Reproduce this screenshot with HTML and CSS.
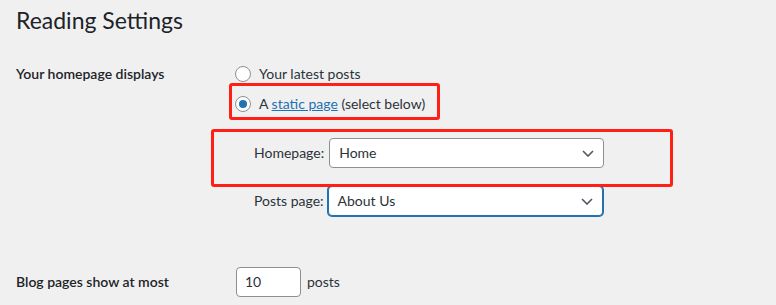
FILE: index.html
```html
<!DOCTYPE html>
<html lang="en">
<head>
    <meta charset="UTF-8">
    <title>Reading Settings</title>
    <link rel="stylesheet" href="styles.css">
</head>
<body>
    <div class="wrap">
        <h1>Reading Settings</h1>

        <div class="form-row row-front">
            <div class="row-label">Your homepage displays</div>
            <div class="row-field">
                <label class="choice"><span class="radio"></span>Your latest posts</label>
                <label class="choice marked"><span class="radio checked"></span>A&nbsp;<a href="#">static page</a>&nbsp;(select below)</label>
                <div class="page-picks">
                    <label class="pick marked-wide">
                        <span>Homepage:</span>
                        <span class="select">Home
                            <svg width="12" height="7" viewBox="0 0 12 7"><path d="M1 1l5 5 5-5" fill="none" stroke="#50575e" stroke-width="1.6"/></svg>
                        </span>
                    </label>
                    <label class="pick">
                        <span>Posts page:</span>
                        <span class="select focused">About Us
                            <svg width="12" height="7" viewBox="0 0 12 7"><path d="M1 1l5 5 5-5" fill="none" stroke="#50575e" stroke-width="1.6"/></svg>
                        </span>
                    </label>
                </div>
            </div>
        </div>

        <div class="form-row row-posts">
            <div class="row-label">Blog pages show at most</div>
            <div class="row-field inline">
                <span class="number-box">10</span>
                <span class="suffix">posts</span>
            </div>
        </div>
    </div>
</body>
</html>
```

FILE: styles.css
```css
body {
    margin: 0;
    background-color: #f0f0f1;
    color: #1d2327;
    font-family: Lato, "Noto Sans", sans-serif;
    font-size: 14px;
    line-height: 20px;
}
.wrap {
    padding-left: 16px;
}
h1 {
    margin: 5px 0 0 0;
    font-size: 23px;
    font-weight: 400;
    line-height: 30px;
    color: #1d2327;
}
.form-row {
    display: flex;
}
.row-label {
    width: 219px;
    flex-shrink: 0;
    font-weight: 600;
}
.row-front {
    margin-top: 29px;
}
.row-field {
    display: flex;
    flex-direction: column;
    align-items: flex-start;
    color: #2c3338;
}
.choice {
    display: inline-flex;
    align-items: center;
    height: 20px;
    margin-bottom: 10px;
}
.choice a {
    color: #2271b1;
}
.radio {
    width: 14px;
    height: 14px;
    border: 1px solid #8c8f94;
    border-radius: 50%;
    background: #fff;
    margin-right: 8px;
    display: flex;
    align-items: center;
    justify-content: center;
}
.radio.checked::before {
    content: "";
    width: 8px;
    height: 8px;
    border-radius: 50%;
    background: #2271b1;
}
.marked {
    position: relative;
}
.marked::after {
    content: "";
    position: absolute;
    top: -11px;
    left: -6px;
    width: 205px;
    height: 31px;
    border: 3px solid #ff1f14;
    border-radius: 3px;
}
.page-picks {
    margin-top: 14px;
    margin-left: 19px;
    display: flex;
    flex-direction: column;
    gap: 18px;
}
.pick {
    display: inline-flex;
    align-items: center;
    gap: 5px;
    align-self: flex-start;
}
.marked-wide {
    position: relative;
}
.marked-wide::after {
    content: "";
    position: absolute;
    top: -9px;
    bottom: -19px;
    left: -43px;
    right: -69px;
    border: 3px solid #ff1f14;
    border-radius: 3px;
}
.select {
    width: 255px;
    height: 28px;
    padding: 0 9px 0 9px;
    background: #fff;
    border: 1px solid #8c8f94;
    border-radius: 4px;
    color: #2c3338;
    display: flex;
    align-items: center;
    justify-content: space-between;
}
.select.focused {
    border-color: #2271b1;
    box-shadow: 0 0 0 1px #2271b1;
    margin-left: -1px;
}
.row-posts {
    margin-top: 51px;
    align-items: center;
}
.row-posts .row-label {
    width: 220px;
}
.inline {
    flex-direction: row;
    align-items: center;
}
.number-box {
    width: 55px;
    height: 28px;
    padding-left: 8px;
    background: #fff;
    border: 1px solid #8c8f94;
    border-radius: 4px;
    color: #2c3338;
    display: flex;
    align-items: center;
}
.suffix {
    margin-left: 6px;
}
```
